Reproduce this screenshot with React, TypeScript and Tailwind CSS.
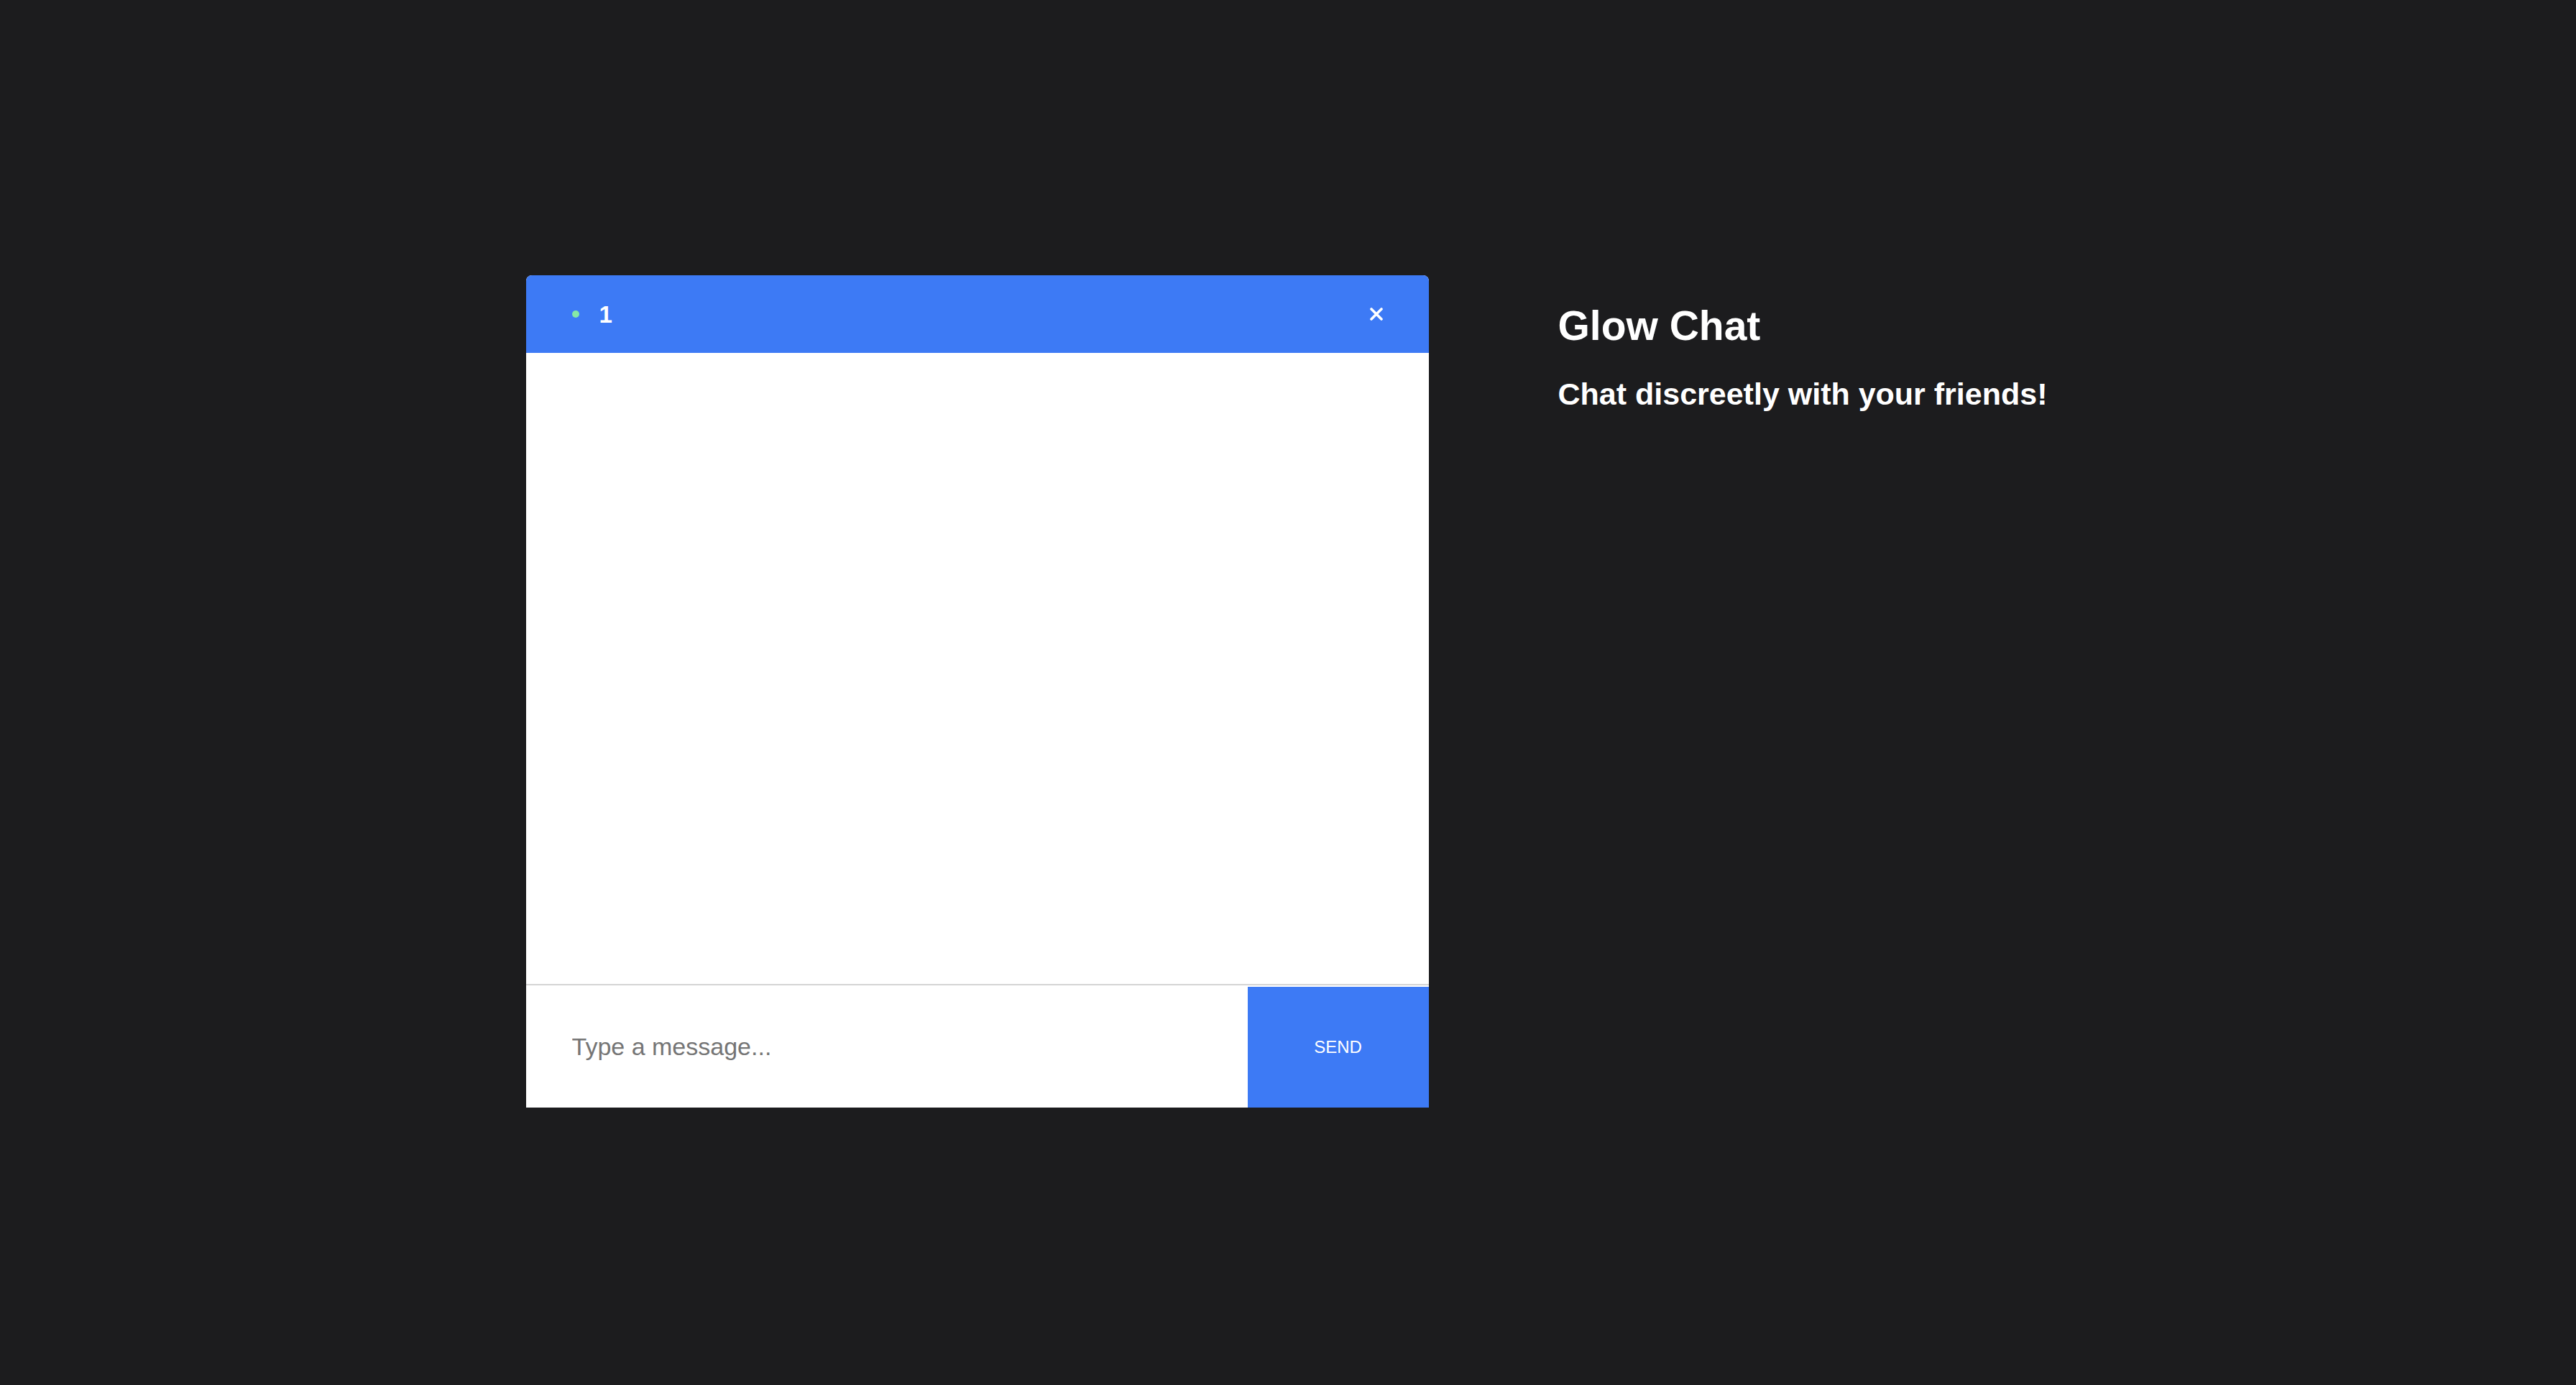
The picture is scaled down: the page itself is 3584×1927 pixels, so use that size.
import React, { useState } from 'react';

const App: React.FC = () => {
  const [text, setText] = useState('');

  return (
    <div
      className="min-h-screen w-full bg-[#1c1c1e] flex items-center justify-center gap-[180px] pr-[4px] pb-[3px]"
      style={{ fontFamily: '"Liberation Sans", Arial, Helvetica, sans-serif' }}
    >
      {/* chat window */}
      <div className="w-[1256px] h-[1158px] flex flex-col bg-white rounded-t-[8px] overflow-hidden">
        <div className="h-[108px] shrink-0 bg-[#3d7af5] flex items-center justify-between px-[64px]">
          <div className="flex items-center gap-[28px]">
            <span className="w-[10px] h-[10px] rounded-full bg-[#86e8a6]" />
            <span className="text-white font-bold text-[33px] leading-none">1</span>
          </div>
          <button type="button" className="w-[18px] h-[18px] flex items-center justify-center">
            <svg width="18" height="18" viewBox="0 0 18 18">
              <path d="M2 2 L16 16 M16 2 L2 16" stroke="white" strokeWidth="3.6" strokeLinecap="round" />
            </svg>
          </button>
        </div>

        <div className="flex-1" />

        <div className="h-[172px] shrink-0 flex border-t-2 border-[#d4d4d4]">
          <input
            type="text"
            placeholder="Type a message..."
            value={text}
            onChange={(e) => setText(e.target.value)}
            className="flex-1 pl-[64px] pr-4 text-[34px] text-[#333] placeholder:text-[#757575] outline-none bg-white"
          />
          <button
            type="button"
            className="w-[252px] mt-[2px] bg-[#3d7af5] text-white text-[24px] flex items-center justify-center"
          >
            SEND
          </button>
        </div>
      </div>

      {/* side text */}
      <div className="self-start mt-[421px] text-white">
        <h1 className="text-[57px] font-bold leading-[1.15]">Glow Chat</h1>
        <p className="text-[43px] font-bold leading-[1.15] mt-[37px]">Chat discreetly with your friends!</p>
      </div>
    </div>
  );
};

export default App;
